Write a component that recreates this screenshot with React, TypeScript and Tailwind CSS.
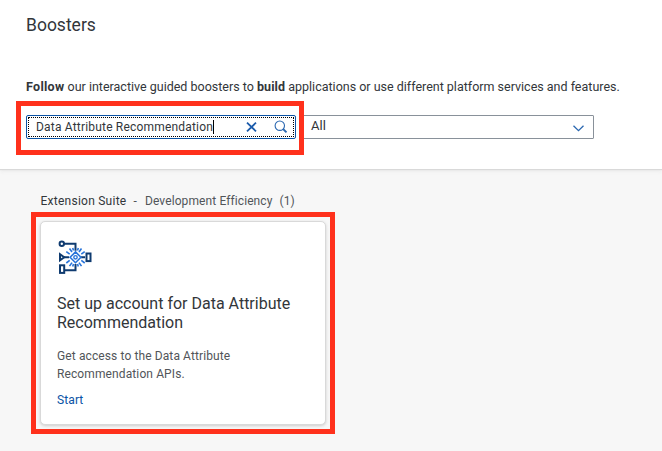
function SearchField() {
  return (
    <div className="relative flex h-6 w-[270px] rounded-[2px] border border-[#0a53a5] bg-white p-px">
      <div className="flex flex-1 items-center border border-dotted border-black pl-[7px]">
        <span className="whitespace-nowrap text-[12px] leading-5 tracking-[0.19px] text-[#32363a]">Data Attribute Recommendation</span>
        <span className="h-[14px] w-px bg-black" />
      </div>
      <svg className="absolute left-[219px] top-[6px]" width="11" height="10" viewBox="0 0 11 10" fill="none" stroke="#1b5bab" strokeWidth="1.8">
        <path d="M1 .7l9 8.6M10 .7L1 9.3" />
      </svg>
      <svg className="absolute left-[247px] top-[4px]" width="14" height="14" viewBox="0 0 14 14" fill="none" stroke="#2a67b0" strokeWidth="1.1">
        <circle cx="5.8" cy="5.7" r="4.7" />
        <path d="M9.2 9.1l3.3 3.3" strokeWidth="2" />
      </svg>
      <div className="absolute -left-[11px] -top-[15px] z-10 h-[54px] w-[288px] border-5 border-[#ff311c]" />
    </div>
  );
}

function BoosterIcon() {
  return (
    <svg width="34" height="36" viewBox="0 0 34 36" fill="none">
      <g stroke="#0f3b70" strokeWidth="2">
        <circle cx="3.8" cy="4.8" r="2.2" />
        <path d="M6 4.8h11.500v7M17.500 25v6.300H6M6 18.300h5M23 18.300h4" />
        <path d="M2 15.300v6l4.200-3z" />
        <rect x="2" y="26.300" width="4.200" height="7.600" />
        <rect x="28.500" y="14.500" width="4" height="7.600" />
      </g>
      <g stroke="#2874da" strokeWidth="1.600">
        <path d="M17.500 12.900l5.400 5.400-5.400 5.400-5.400-5.400z" />
        <circle cx="17.500" cy="18.300" r="1.700" strokeWidth="1.400" />
        <path d="M14 13l-2.500-3.500M11.700 15.200L8.300 12.600M15.500 11.500l-.8-2.500M21 13l2.500-3.500M23.300 15.200l3.400-2.600M19.500 11.500l.8-2.500M14 23.600l-2.500 3.500M11.700 21.400l-3.400 2.600M15.500 25.100l-.8 2.500M21 23.600l2.500 3.500M23.300 21.400l3.400 2.600M19.500 25.100l.8 2.500" />
      </g>
    </svg>
  );
}

export default function App() {
  return (
    <div className="h-[451px] w-[662px] overflow-hidden bg-[#f7f7f7] font-['Roboto',sans-serif] text-[#32363a]">
      <header className="flex h-[169px] flex-col bg-white pl-[26px] shadow-[0_1px_1px_#d9d9d9,0_2px_4px_#e8e8e8]">
        <h1 className="mt-[13px] h-6 text-[17.5px] leading-6">Boosters</h1>
        <p className="mt-[41px] h-[18px] whitespace-nowrap text-[12.5px] leading-[18px]">
          <span className="font-bold tracking-[0.3px]">Follow</span> our interactive guided boosters to <span className="font-bold tracking-[0.1px]">build</span> applications or use different platform services and features.
        </p>
        <div className="mt-[19px] flex">
          <SearchField />
          <div className="ml-1 flex h-6 w-[294px] items-center justify-between rounded-[1px] border border-[#89919a] bg-white pl-[10px] pr-[9px]">
            <span className="-mt-0.5 text-[13px] leading-5">All</span>
            <svg className="mt-[3px]" width="11" height="7" viewBox="0 0 11 7" fill="none" stroke="#2a67b0" strokeWidth="1.3">
              <path d="M.5 .7l5 5 5-5" />
            </svg>
          </div>
        </div>
      </header>
      <main className="flex flex-col items-start pl-[31px]">
        <div className="mt-[23px] flex h-[18px] whitespace-pre pl-[9.5px] text-[12px] leading-[18px] text-[#515559]">
          <span className="w-[93px] tracking-[0.25px] text-[#32363a]">Extension Suite</span>
          <span className="w-[11.5px]">-</span>
          <span className="w-[134.5px] tracking-[0.1px]">Development Efficiency</span>
          <span className="tracking-[0.1px]">(1)</span>
        </div>
        <div className="mt-0.5 h-[222px] w-[304px] border-5 border-[#ff311c] p-1">
          <article className="flex h-[204px] w-[286px] flex-col items-start rounded-[5px] border border-[#d9d9d9] bg-white pl-4 shadow-[0_1px_3px_#cccccc]">
            <div className="mt-[17px] h-9 pl-px">
              <BoosterIcon />
            </div>
            <h2 className="mt-[19px] whitespace-nowrap text-[16px] leading-[19px]">
              Set up account for Data Attribute
              <br />
              Recommendation
            </h2>
            <p className="mt-[15px] whitespace-nowrap text-[12px] leading-[18px] tracking-[0.11px] text-[#515559]">
              Get access to the Data Attribute
              <br />
              Recommendation APIs.
            </p>
            <a className="mt-2 text-[12px] leading-[18px] tracking-[0.1px] text-[#0a53a5]">Start</a>
          </article>
        </div>
      </main>
    </div>
  );
}
